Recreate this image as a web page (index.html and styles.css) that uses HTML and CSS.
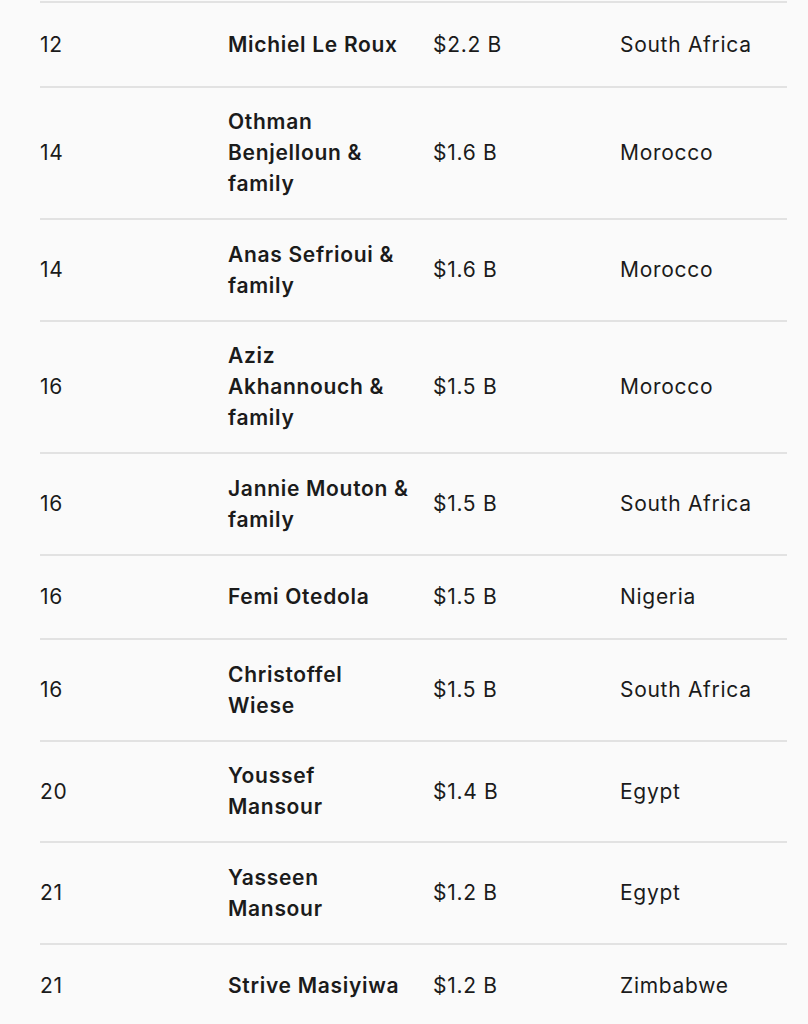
FILE: index.html
```html
<!DOCTYPE html>
<html>
<head>
<meta charset="utf-8">
<link rel="stylesheet" href="styles.css">
</head>
<body>
<div class="table">
  <div class="row"><div class="rank">12</div><div class="name">Michiel Le Roux</div><div class="worth">$2.2 B</div><div class="country">South Africa</div></div>
  <div class="row"><div class="rank">14</div><div class="name">Othman Benjelloun &amp; family</div><div class="worth">$1.6 B</div><div class="country">Morocco</div></div>
  <div class="row"><div class="rank">14</div><div class="name">Anas Sefrioui &amp; family</div><div class="worth">$1.6 B</div><div class="country">Morocco</div></div>
  <div class="row"><div class="rank">16</div><div class="name">Aziz Akhannouch &amp; family</div><div class="worth">$1.5 B</div><div class="country">Morocco</div></div>
  <div class="row"><div class="rank">16</div><div class="name">Jannie Mouton &amp; family</div><div class="worth">$1.5 B</div><div class="country">South Africa</div></div>
  <div class="row"><div class="rank">16</div><div class="name">Femi Otedola</div><div class="worth">$1.5 B</div><div class="country">Nigeria</div></div>
  <div class="row"><div class="rank">16</div><div class="name">Christoffel Wiese</div><div class="worth">$1.5 B</div><div class="country">South Africa</div></div>
  <div class="row"><div class="rank">20</div><div class="name">Youssef Mansour</div><div class="worth">$1.4 B</div><div class="country">Egypt</div></div>
  <div class="row"><div class="rank">21</div><div class="name">Yasseen Mansour</div><div class="worth">$1.2 B</div><div class="country">Egypt</div></div>
  <div class="row"><div class="rank">21</div><div class="name">Strive Masiyiwa</div><div class="worth">$1.2 B</div><div class="country">Zimbabwe</div></div>
</div>
</body>
</html>
```
FILE: styles.css
```css
html, body {
  margin: 0;
  padding: 0;
  background: #fafafa;
}
body {
  font-family: Inter, "Noto Sans", sans-serif;
  color: #1b1b1b;
  font-size: 21px;
  line-height: 31px;
  letter-spacing: 0.7px;
}
.table {
  padding: 1px 21px 0 40px;
}
.row {
  display: grid;
  grid-template-columns: 188px 205px 187px 1fr;
  align-items: center;
  border-top: 2px solid #e2e2e2;
  padding: 18.75px 0;
  min-height: 84.5px;
  box-sizing: border-box;
}
.name {
  font-weight: 600;
  padding-right: 21px;
}
```
